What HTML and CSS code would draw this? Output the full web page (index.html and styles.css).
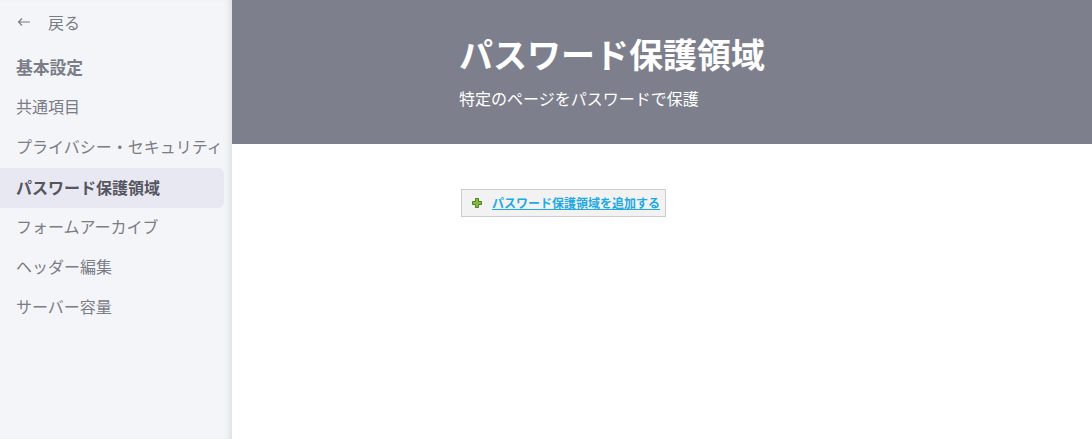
FILE: index.html
```html
<!DOCTYPE html>
<html lang="ja">
<head>
  <meta charset="UTF-8">
  <title>パスワード保護領域</title>
  <link rel="stylesheet" href="styles.css">
</head>
<body>
  <div class="layout">
    <nav class="sidebar">
      <a class="back" href="#">
        <svg class="back-arrow" width="13" height="10" viewBox="0 0 13 10">
          <path d="M13 5H1.5M5 1.5L1.5 5L5 8.5" fill="none" stroke="#777983" stroke-width="1.1"/>
        </svg>
        戻る
      </a>
      <div class="side-title">基本設定</div>
      <a class="side-item" href="#">共通項目</a>
      <a class="side-item" href="#">プライバシー・セキュリティ</a>
      <a class="side-item active" href="#">パスワード保護領域</a>
      <a class="side-item" href="#">フォームアーカイブ</a>
      <a class="side-item" href="#">ヘッダー編集</a>
      <a class="side-item" href="#">サーバー容量</a>
    </nav>
    <main class="main">
      <header class="hero">
        <h1>パスワード保護領域</h1>
        <p>特定のページをパスワードで保護</p>
      </header>
      <section class="content">
        <div class="add-box">
          <svg class="plus" width="12" height="12" viewBox="0 0 12 12">
            <path d="M4.5 1.5h3v3h3v3h-3v3h-3v-3h-3v-3h3z" fill="#86bb3e" stroke="#4f7f24" stroke-width="1"/>
          </svg>
          <a href="#">パスワード保護領域を追加する</a>
        </div>
      </section>
    </main>
  </div>
</body>
</html>
```

FILE: styles.css
```css
* {
  box-sizing: border-box;
}

html, body {
  margin: 0;
  height: 100%;
  overflow: hidden;
}

body {
  font-family: "Noto Sans CJK JP", "Noto Sans", sans-serif;
  background: #fff;
}

.layout {
  display: flex;
  height: 100%;
}

.sidebar {
  width: 232px;
  flex-shrink: 0;
  background: #f4f5f9;
  box-shadow: inset -6px 0 6px -4px rgba(0, 0, 0, 0.1);
  padding: 3px 8px 0 0;
  white-space: nowrap;
}

.back {
  display: flex;
  align-items: center;
  height: 38px;
  padding-left: 17px;
  font-size: 16px;
  color: #7a7c86;
  text-decoration: none;
}

.back-arrow {
  margin-right: 18px;
}

.side-title {
  height: 34px;
  line-height: 34px;
  margin: 9px 0 4px;
  padding-left: 16px;
  font-size: 16.8px;
  font-weight: 700;
  color: #7a7c87;
}

.side-item {
  display: block;
  height: 40px;
  line-height: 37px;
  padding-left: 16px;
  font-size: 16px;
  color: #7a7c86;
  text-decoration: none;
  border-radius: 0 6px 6px 0;
}

.side-item.active {
  line-height: 39px;
  background: #e8e8f2;
  color: #55565f;
  font-weight: 700;
}

.main {
  flex: 1;
}

.hero {
  height: 144px;
  background: #7d808c;
  color: #fff;
  padding: 31px 0 0 227px;
}

.hero h1 {
  margin: 0;
  font-size: 34px;
  line-height: 46px;
  font-weight: 700;
}

.hero p {
  margin: 9px 0 0;
  font-size: 16px;
  line-height: 24px;
}

.content {
  padding: 45px 0 0 229px;
}

.add-box {
  display: inline-flex;
  align-items: center;
  height: 28px;
  padding: 0 5px 0 9px;
  background: #f2f2f2;
  border: 1px solid #ccc;
}

.plus {
  margin-right: 9px;
}

.add-box a {
  margin-bottom: 2px;
  font-size: 12px;
  font-weight: 700;
  color: #1fa9e3;
}
```
